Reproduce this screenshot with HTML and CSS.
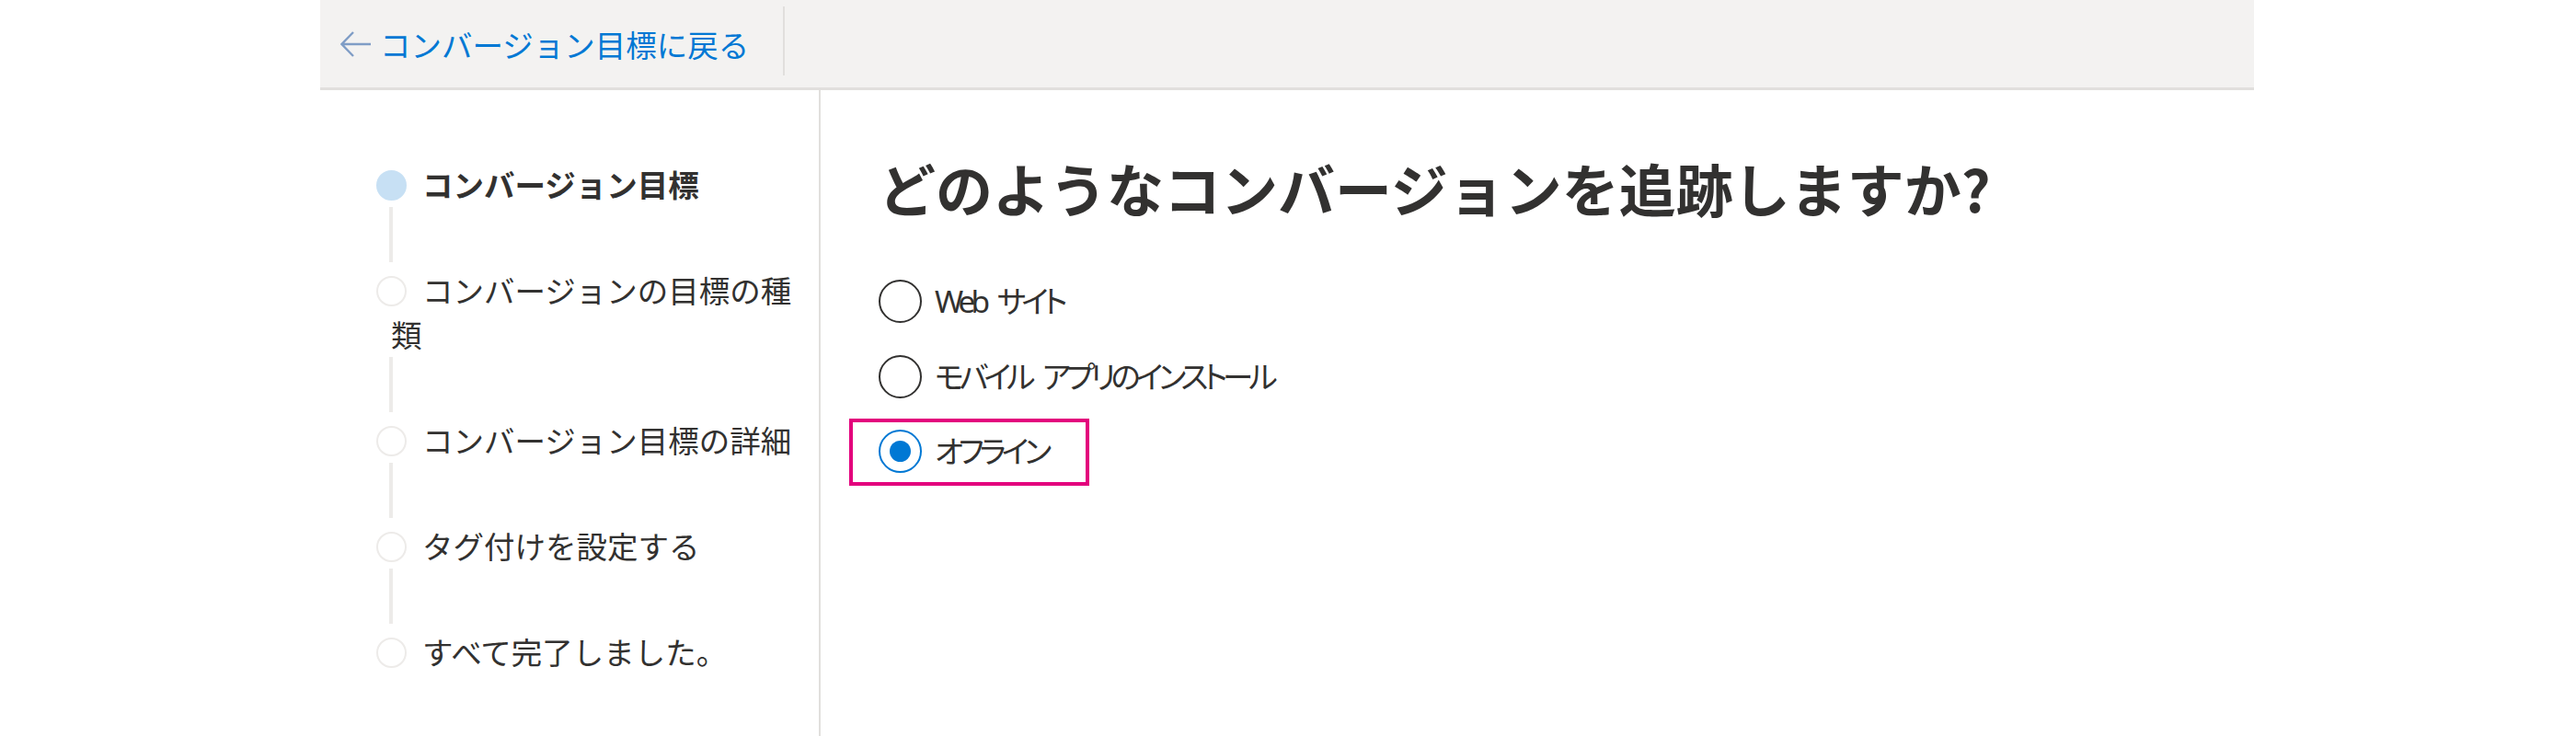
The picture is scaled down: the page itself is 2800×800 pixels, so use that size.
FILE: index.html
```html
<!DOCTYPE html>
<html>
  <head>
    <meta charset="UTF-8">
    <title>コンバージョン目標</title>
    <link rel="stylesheet" href="styles.css">
  </head>
  <body>
    <div class="page">
      <header class="topbar">
        <a class="back" href="#">
          <svg class="back-icon" width="34" height="30" viewBox="0 0 34 30">
            <path d="M33 15H2M14 2L1.5 15L14 28" fill="none" stroke="#7f9dc6" stroke-width="2.4"/>
          </svg>
          <span>コンバージョン目標に戻る</span>
        </a>
        <span class="topbar-sep"></span>
      </header>

      <div class="layout">
        <nav class="steps">
          <ol class="step-list">
            <li class="step current"><span class="dot"></span>コンバージョン目標</li>
            <li class="connector"></li>
            <li class="step"><span class="dot"></span>コンバージョンの目標の種類</li>
            <li class="connector"></li>
            <li class="step"><span class="dot"></span>コンバージョン目標の詳細</li>
            <li class="connector"></li>
            <li class="step"><span class="dot"></span>タグ付けを設定する</li>
            <li class="connector"></li>
            <li class="step"><span class="dot"></span>すべて完了しました。</li>
          </ol>
        </nav>

        <main class="content">
          <h1 class="title">どのようなコンバージョンを追跡しますか?</h1>
          <div class="options">
            <label class="option"><span class="radio"></span><span class="option-label">Web サイト</span></label>
            <label class="option"><span class="radio"></span><span class="option-label">モバイル アプリのインストール</span></label>
            <label class="option checked marked"><span class="radio"></span><span class="option-label">オフライン</span></label>
          </div>
        </main>
      </div>
    </div>
  </body>
</html>
```

FILE: styles.css
```css
body, html {
  margin: 0;
}

body {
  font-family: "Noto Sans", "Noto Sans CJK JP", sans-serif;
  color: #323130;
  background: #fff;
}

.page {
  width: 2102px;
  height: 800px;
  margin-left: 348px;
  display: flex;
  flex-direction: column;
}

/* top bar */

.topbar {
  height: 95px;
  flex: none;
  background: #f3f2f1;
  border-bottom: 3px solid #e1dfdd;
  display: flex;
  align-items: center;
}

.back {
  display: flex;
  align-items: center;
  gap: 9px;
  margin-left: 22px;
  color: #0078d4;
  text-decoration: none;
  font-family: "Noto Sans CJK JP", sans-serif;
  font-size: 33.5px;
  line-height: 48px;
}

.back-icon {
  display: block;
}

.topbar-sep {
  align-self: flex-start;
  width: 2px;
  height: 75px;
  margin: 7px 0 0 37px;
  background: #e1dfdd;
}

/* body */

.layout {
  flex: 1;
  display: flex;
}

.steps {
  width: 542px;
  flex: none;
  border-right: 2px solid #e1dfdd;
}

.step-list {
  list-style: none;
  margin: 0;
  padding: 78px 14px 0 77px;
}

.step {
  font-family: "Noto Sans CJK JP", sans-serif;
  font-size: 33.5px;
  line-height: 48px;
}

.dot {
  display: inline-block;
  width: 33px;
  height: 33px;
  box-sizing: border-box;
  border: 2.5px solid #edebe9;
  border-radius: 50%;
  background: #fff;
  margin: 0 17.5px 0 -16.5px;
  vertical-align: -4px;
}

.current {
  font-weight: 700;
}

.current .dot {
  background: #c7e0f4;
  border-color: #c7e0f4;
}

.connector {
  width: 4px;
  height: 60px;
  margin: 1px 0 6px -2px;
  background: #edebe9;
}

.content {
  flex: 1;
  padding: 66px 0 0 63px;
}

.title {
  margin: 0;
  font-family: "Noto Sans CJK JP", sans-serif;
  font-size: 62px;
  line-height: 80px;
  font-weight: 700;
}

.options {
  margin-top: 60px;
  display: flex;
  flex-direction: column;
  align-items: flex-start;
  gap: 34.5px;
}

.option {
  position: relative;
  display: flex;
  align-items: center;
  gap: 14px;
  font-size: 33.5px;
  line-height: 47px;
  font-feature-settings: "palt";
}

.option-label {
  letter-spacing: -5px;
  word-spacing: 9px;
}

.radio {
  width: 47px;
  height: 47px;
  box-sizing: border-box;
  border: 2.5px solid #323130;
  border-radius: 50%;
  display: flex;
  align-items: center;
  justify-content: center;
}

.checked .radio {
  border-color: #0078d4;
}

.checked .radio::after {
  content: "";
  width: 23px;
  height: 23px;
  border-radius: 50%;
  background: #0078d4;
}

.marked::after {
  content: "";
  position: absolute;
  left: -32px;
  right: -46px;
  top: -12px;
  bottom: -14px;
  border: 4px solid #e3007d;
}
```
